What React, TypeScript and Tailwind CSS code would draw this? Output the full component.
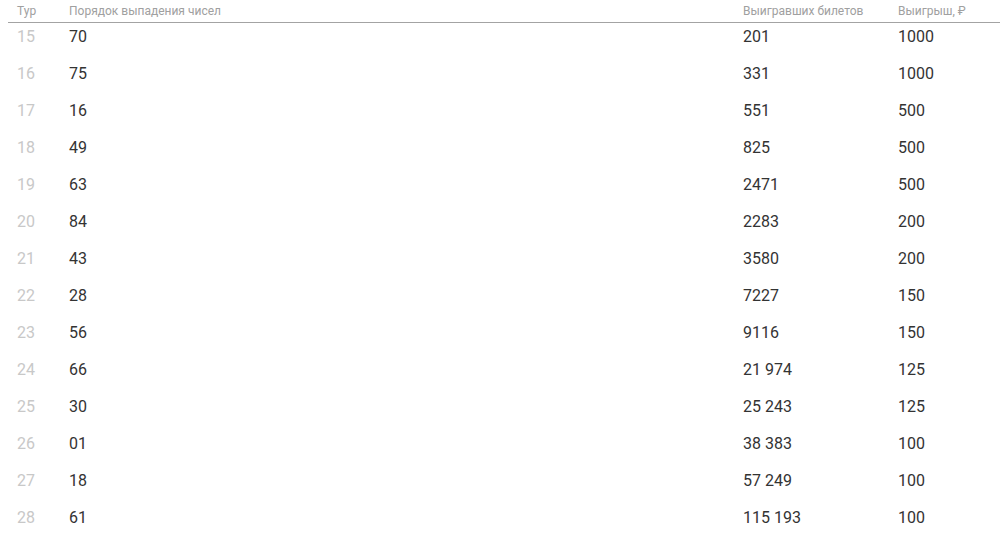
import React from 'react';

const rows: [number, string, string, string][] = [
  [15, '70', '201', '1000'],
  [16, '75', '331', '1000'],
  [17, '16', '551', '500'],
  [18, '49', '825', '500'],
  [19, '63', '2471', '500'],
  [20, '84', '2283', '200'],
  [21, '43', '3580', '200'],
  [22, '28', '7227', '150'],
  [23, '56', '9116', '150'],
  [24, '66', '21 974', '125'],
  [25, '30', '25 243', '125'],
  [26, '01', '38 383', '100'],
  [27, '18', '57 249', '100'],
  [28, '61', '115 193', '100'],
];

export default function App() {
  return (
    <div className="w-[1000px] h-[543px] bg-white pl-2 font-['Roboto',sans-serif] overflow-hidden">
      {/* Header */}
      <div className="grid grid-cols-[61px_674px_155px_1fr] h-[23px] border-b border-[#a3a3a3] text-[12px] leading-[22px] text-[#a0a0a0]">
        <div className="pl-[9px]">Тур</div>
        <div>Порядок выпадения чисел</div>
        <div>Выигравших билетов</div>
        <div>Выигрыш, ₽</div>
      </div>

      {/* Rows */}
      {rows.map(([tour, order, tickets, prize]) => (
        <div
          key={tour}
          className="grid grid-cols-[61px_674px_155px_1fr] h-[37px] text-[16px] leading-[28px] text-[#333333]"
        >
          <div className="pl-[9px] text-[#c8c8c8]">{tour}</div>
          <div>{order}</div>
          <div>{tickets}</div>
          <div>{prize}</div>
        </div>
      ))}
    </div>
  );
}
